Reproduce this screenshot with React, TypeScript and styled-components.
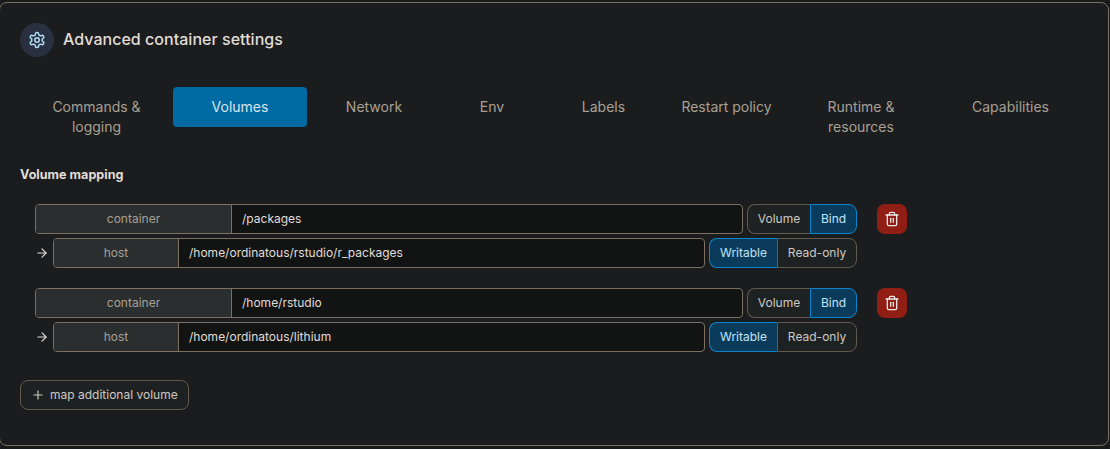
import React from 'react';
import styled, { createGlobalStyle, css } from 'styled-components';
import { ArrowRight, Plus, Trash2 } from 'lucide-react';

const GlobalStyle = createGlobalStyle`
  *, *::before, *::after { box-sizing: border-box; }
  body {
    margin: 0;
    background: #181a1b;
    color: #e0ddd9;
    font-family: Inter, "Liberation Sans", sans-serif;
    font-size: 12px;
    overflow: hidden;
  }
`;

const Panel = styled.section`
  margin: 2px 0 0 -1px;
  width: 1110px;
  height: 444px;
  padding: 20px;
  border: 1px solid #7b7062;
  border-radius: 8px;
  background: #1b1c1d;
`;

const Header = styled.header`
  display: flex;
  align-items: center;
  gap: 9px;
  height: 34px;
`;

const IconCircle = styled.span`
  display: flex;
  align-items: center;
  justify-content: center;
  width: 34px;
  height: 34px;
  border-radius: 50%;
  background: #293141;
  color: #b3dcf5;
`;

const Title = styled.h1`
  margin: 0 0 2px;
  font-size: 16px;
  font-weight: 500;
  line-height: 20px;
  letter-spacing: 0.03px;
`;

const Tabs = styled.nav`
  display: grid;
  grid-template-columns: 153px 134px 134px 102px 121px 125px 144px 155px;
  align-items: start;
  margin-top: 30px;
  height: 60px;
`;

const Tab = styled.a<{ $active?: boolean }>`
  padding: 10px 16px;
  border-radius: 4px;
  font-size: 14px;
  line-height: 20px;
  text-align: center;
  color: ${(p) => (p.$active ? '#d9e4ea' : '#a8a095')};
  background: ${(p) => (p.$active ? '#026aa2' : 'transparent')};
`;

const TabLabel = styled.span<{ $wrap?: boolean }>`
  display: inline-block;
  max-width: ${(p) => (p.$wrap ? '94px' : 'none')};
  white-space: ${(p) => (p.$wrap ? 'normal' : 'nowrap')};
`;

const SectionTitle = styled.h2`
  margin: 19px 0 0;
  font-size: 12.6px;
  font-weight: 700;
  line-height: 18px;
`;

const Mappings = styled.div`
  display: flex;
  flex-direction: column;
  gap: 20px;
  margin: 20px 0 0 15px;
`;

const Mapping = styled.div`
  display: flex;
  flex-direction: column;
  gap: 4px;
`;

const Line = styled.div`
  display: flex;
  align-items: center;
  height: 30px;
`;

const ArrowSlot = styled.span`
  display: flex;
  width: 18px;
`;

const Field = styled.label<{ $width: number }>`
  display: flex;
  width: ${(p) => p.$width}px;
  height: 30px;
  margin-right: 4px;
  border: 1px solid #7b7062;
  border-radius: 4px;
  overflow: hidden;
  background: #121413;
  line-height: 28px;
`;

const FieldName = styled.span<{ $width: number }>`
  width: ${(p) => p.$width}px;
  border-right: 1px solid #7b7062;
  background: #2a2e2f;
  color: #a8a095;
  text-align: center;
`;

const FieldValue = styled.span`
  padding-left: 10px;
`;

const Toggle = styled.div`
  display: flex;
`;

const selected = css`
  border-color: #0a84cc;
  background: #0b3b5a;
  color: #c3e4f7;
`;

const Option = styled.button<{ $width: number; $selected?: boolean }>`
  width: ${(p) => p.$width}px;
  height: 30px;
  padding: 0 0 2px;
  border: 1px solid #625a4e;
  background: #1e2122;
  color: #cdc9c3;
  font: inherit;
  &:first-child { border-radius: 8px 0 0 8px; border-right-width: 0; }
  &:last-child { border-radius: 0 8px 8px 0; }
  ${(p) => p.$selected && selected}
`;

const DeleteButton = styled.button`
  display: flex;
  align-items: center;
  justify-content: center;
  width: 30px;
  height: 30px;
  margin-left: 20px;
  padding: 0;
  border: 0;
  border-radius: 8px;
  background: #911e14;
  color: #e8e6e3;
`;

const AddButton = styled.button`
  display: flex;
  align-items: center;
  gap: 5px;
  width: 169px;
  height: 30px;
  margin-top: 28px;
  padding: 0 0 0 10px;
  border: 1px solid #625a4e;
  border-radius: 8px;
  background: #1e2122;
  color: #cdc9c3;
  font: inherit;
`;

const AddLabel = styled.span`
  padding-bottom: 2px;
`;

const GearIcon = () => (
  <svg width="18" height="18" viewBox="0 0 24 24" fill="none" stroke="currentColor" strokeWidth="2" strokeLinecap="round" strokeLinejoin="round">
    <path d="M12.22 2h-.44a2 2 0 0 0-2 2v.18a2 2 0 0 1-1 1.73l-.43.25a2 2 0 0 1-2 0l-.15-.08a2 2 0 0 0-2.73.73l-.22.38a2 2 0 0 0 .73 2.73l.15.1a2 2 0 0 1 1 1.72v.51a2 2 0 0 1-1 1.74l-.15.09a2 2 0 0 0-.73 2.73l.22.38a2 2 0 0 0 2.73.73l.15-.08a2 2 0 0 1 2 0l.43.25a2 2 0 0 1 1 1.73V20a2 2 0 0 0 2 2h.44a2 2 0 0 0 2-2v-.18a2 2 0 0 1 1-1.73l.43-.25a2 2 0 0 1 2 0l.15.08a2 2 0 0 0 2.73-.73l.22-.39a2 2 0 0 0-.73-2.73l-.15-.08a2 2 0 0 1-1-1.74v-.5a2 2 0 0 1 1-1.74l.15-.09a2 2 0 0 0 .73-2.73l-.22-.38a2 2 0 0 0-2.73-.73l-.15.08a2 2 0 0 1-2 0l-.43-.25a2 2 0 0 1-1-1.73V4a2 2 0 0 0-2-2z" />
    <circle cx="12" cy="12" r="3" />
  </svg>
);

const tabs = [
  { name: 'Commands & logging', wrap: true },
  { name: 'Volumes' },
  { name: 'Network' },
  { name: 'Env' },
  { name: 'Labels' },
  { name: 'Restart policy' },
  { name: 'Runtime & resources', wrap: true },
  { name: 'Capabilities' },
];

const volumes = [
  { container: '/packages', host: '/home/ordinatous/rstudio/r_packages' },
  { container: '/home/rstudio', host: '/home/ordinatous/lithium' },
];

export default function App() {
  return (
    <>
      <GlobalStyle />
      <Panel>
        <Header>
          <IconCircle><GearIcon /></IconCircle>
          <Title>Advanced container settings</Title>
        </Header>
        <Tabs>
          {tabs.map(({ name, wrap }) => (
            <Tab key={name} $active={name === 'Volumes'}>
              <TabLabel $wrap={wrap}>{name}</TabLabel>
            </Tab>
          ))}
        </Tabs>
        <SectionTitle>Volume mapping</SectionTitle>
        <Mappings>
          {volumes.map((v) => (
            <Mapping key={v.container}>
              <Line>
                <Field $width={708}>
                  <FieldName $width={196}>container</FieldName>
                  <FieldValue>{v.container}</FieldValue>
                </Field>
                <Toggle>
                  <Option $width={63}>Volume</Option>
                  <Option $width={47} $selected>Bind</Option>
                </Toggle>
                <DeleteButton aria-label="Remove"><Trash2 size={16} /></DeleteButton>
              </Line>
              <Line>
                <ArrowSlot><ArrowRight size={14} /></ArrowSlot>
                <Field $width={652}>
                  <FieldName $width={125}>host</FieldName>
                  <FieldValue>{v.host}</FieldValue>
                </Field>
                <Toggle>
                  <Option $width={68} $selected>Writable</Option>
                  <Option $width={80}>Read-only</Option>
                </Toggle>
              </Line>
            </Mapping>
          ))}
        </Mappings>
        <AddButton><Plus size={14} /><AddLabel>map additional volume</AddLabel></AddButton>
      </Panel>
    </>
  );
}
